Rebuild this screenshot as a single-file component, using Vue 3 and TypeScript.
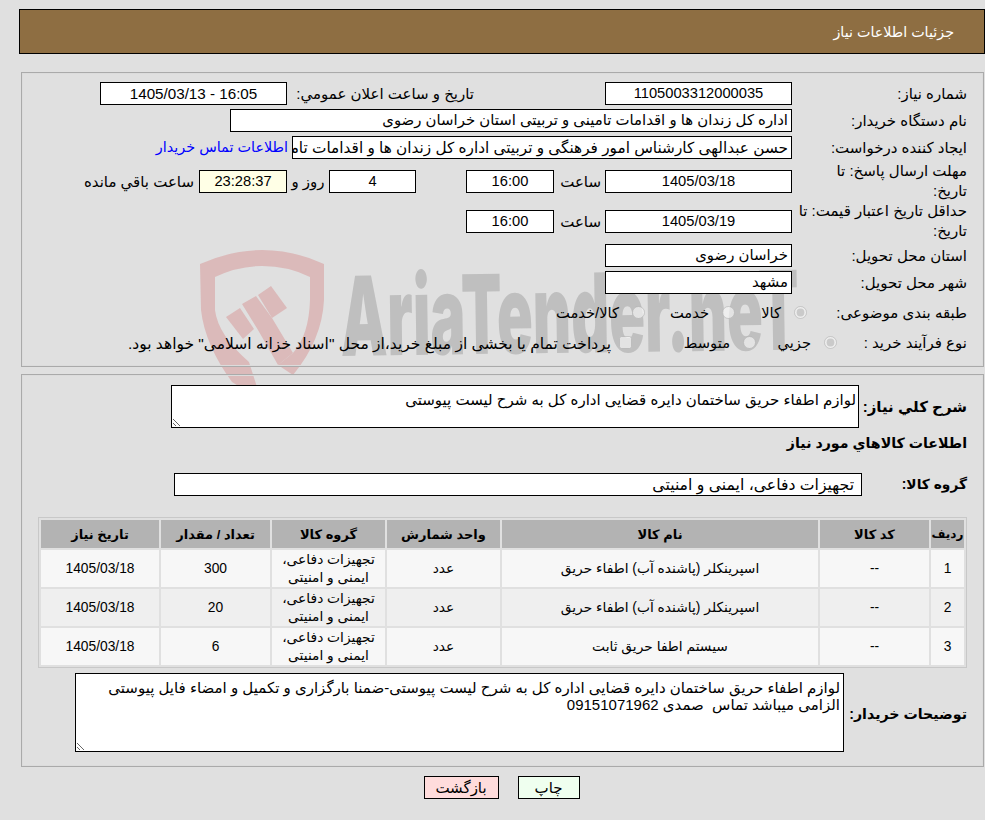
<script setup lang="ts">
interface Item { id: string; code: string; name: string; unit: string; group: string; qty: string; date: string }
const group = 'تجهیزات دفاعی، ایمنی و امنیتی'
const items: Item[] = [
  { id: '1', code: '--', name: 'اسپرینکلر (پاشنده آب) اطفاء حریق', unit: 'عدد', group, qty: '300', date: '1405/03/18' },
  { id: '2', code: '--', name: 'اسپرینکلر (پاشنده آب) اطفاء حریق', unit: 'عدد', group, qty: '20', date: '1405/03/18' },
  { id: '3', code: '--', name: 'سیستم اطفا حریق ثابت', unit: 'عدد', group, qty: '6', date: '1405/03/18' },
]
const summary = 'لوازم اطفاء حریق ساختمان دایره قضایی اداره کل به شرح لیست پیوستی'
const notes = 'لوازم اطفاء حریق ساختمان دایره قضایی اداره کل به شرح لیست پیوستی-ضمنا بارگزاری و تکمیل و امضاء فایل پیوستی الزامی میباشد تماس  صمدی 09151071962'
</script>

<template>
  <div class="page" dir="rtl">
    <svg class="mark" width="985" height="420" viewBox="0 0 985 420" aria-hidden="true">
      <g fill="#dbbaba">
        <path d="M200 64Q232 50 262 50Q294 50 324 64L324 100Q322 140 293 175L278 165L293 153Q309 135 310 100L310 77Q288 66 262 66Q238 66 215 77L215 110Q218 135 249 162L257 187L240 187L232 182Q205 145 201 110Z" />
        <path d="M226 117L240 108L254 129L243 139Z" />
        <path d="M242 104L256 96L272 118L293 153L278 165L258 130Z" />
        <path d="M258 95L271 86L287 108L272 118Z" />
      </g>
      <text class="mark-text" transform="translate(341 156) rotate(-0.8) scale(0.536 1)">AriaTender.neT</text>
    </svg>

    <header class="title">جزئیات اطلاعات نیاز</header>

    <section class="panel first">
      <div class="row r27">
        <label class="lab">شماره نیاز:</label>
        <output class="box w187 center num">1105003312000035</output>
        <span class="publish">تاریخ و ساعت اعلان عمومي:</span>
        <output class="box w187 center stamp">16:05 - 1405/03/13</output>
      </div>
      <div class="row r27">
        <label class="lab">نام دستگاه خریدار:</label>
        <output class="box w562">اداره کل زندان ها و اقدامات تامینی و تربیتی استان خراسان رضوی</output>
      </div>
      <div class="row r27">
        <label class="lab">ایجاد کننده درخواست:</label>
        <output class="box w500 clip">حسن عبدالهی کارشناس امور فرهنگی و تربیتی اداره کل زندان ها و اقدامات تامینی</output>
        <a class="contact" href="#">اطلاعات تماس خریدار</a>
      </div>
      <div class="row r39">
        <label class="lab">مهلت ارسال پاسخ: تا<br />تاریخ:</label>
        <output class="box w187 center num">1405/03/18</output>
        <span class="hour">ساعت</span>
        <output class="box w88 center num">16:00</output>
        <output class="box w87 center days num">4</output>
        <span class="day-text">روز و</span>
        <output class="box w88 center clock num">23:28:37</output>
        <span class="rest">ساعت باقي مانده</span>
      </div>
      <div class="row r39">
        <label class="lab">حداقل تاریخ اعتبار قیمت: تا<br />تاریخ:</label>
        <output class="box w187 center num">1405/03/19</output>
        <span class="hour">ساعت</span>
        <output class="box w88 center num">16:00</output>
      </div>
      <div class="row r27 top1">
        <label class="lab">استان محل تحویل:</label>
        <output class="box w187">خراسان رضوی</output>
      </div>
      <div class="row r27">
        <label class="lab">شهر محل تحویل:</label>
        <output class="box w187">مشهد</output>
      </div>
      <div class="row r30 top2">
        <label class="lab kind-lab">طبقه بندی موضوعی:</label>
        <input class="opt" type="radio" name="kind" checked disabled />
        <span class="opt-t t-kala">کالا</span>
        <input class="opt" type="radio" name="kind" disabled />
        <span class="opt-t t-khedmat">خدمت</span>
        <input class="opt" type="radio" name="kind" disabled />
        <span class="opt-t">کالا/خدمت</span>
      </div>
      <div class="row r30">
        <label class="lab type-lab">نوع فرآیند خرید :</label>
        <input class="opt" type="radio" name="proc" checked disabled />
        <span class="opt-t t-jozi">جزيي</span>
        <input class="opt" type="radio" name="proc" disabled />
        <span class="opt-t t-mot">متوسط</span>
        <input class="opt check" type="checkbox" disabled />
        <span class="opt-t long">پرداخت تمام یا بخشی از مبلغ خرید،از محل "اسناد خزانه اسلامی" خواهد بود.</span>
      </div>
    </section>

    <section class="panel second">
      <div class="row sum-row">
        <label class="lab-b sum-lab">شرح کلي نیاز:</label>
        <textarea class="area sum" readonly :value="summary"></textarea>
      </div>
      <h2 class="subhead">اطلاعات کالاهاي مورد نیاز</h2>
      <div class="row grp-row">
        <label class="lab-b grp-lab">گروه کالا:</label>
        <output class="box grp">{{ group }}</output>
      </div>
      <table class="items">
        <thead>
          <tr>
            <th class="c1">ردیف</th><th class="c2">کد کالا</th><th class="c3">نام کالا</th>
            <th class="c4">واحد شمارش</th><th class="c5">گروه کالا</th><th class="c6">تعداد / مقدار</th><th class="c7">تاریخ نیاز</th>
          </tr>
        </thead>
        <tbody>
          <tr v-for="it in items" :key="it.id">
            <td>{{ it.id }}</td><td>{{ it.code }}</td><td>{{ it.name }}</td><td>{{ it.unit }}</td>
            <td class="wrap">{{ it.group }}</td><td>{{ it.qty }}</td><td>{{ it.date }}</td>
          </tr>
        </tbody>
      </table>
      <div class="row note-row">
        <label class="lab-b note-lab">توضیحات خریدار:</label>
        <textarea class="area note" readonly :value="notes"></textarea>
      </div>
    </section>

    <div class="actions">
      <button class="btn print" type="button">چاپ</button>
      <button class="btn back" type="button">بازگشت</button>
    </div>
  </div>
</template>

<style>
html, body { margin: 0; background: #e0e0e0; }
</style>

<style scoped>
.page {
  position: relative;
  width: 985px;
  height: 820px;
  overflow: hidden;
  box-sizing: border-box;
  padding-top: 9px;
  background: #e0e0e0;
  color: #000;
  font: 15px/17px "Liberation Sans", "DejaVu Sans", sans-serif;
}
.mark { position: absolute; left: 0; top: 200px; direction: ltr; }
.mark-text { font: 900 110px Inter, sans-serif; fill: #bfbfbf; direction: ltr; }
.title {
  position: relative;
  box-sizing: border-box;
  height: 45px;
  margin-left: 19px;
  padding: 14px 30px 0 0;
  border: 1px solid #000;
  background: #8e6e42;
  color: #fff;
  font-size: 14.3px;
}
.panel {
  position: relative;
  box-sizing: border-box;
  margin-right: 1px;
  margin-left: 21px;
  padding-right: 15px;
  border: 1px solid #aaa;
  box-shadow: inset 0 0 0 1px #dcdcdc;
}
.first { height: 295px; margin-top: 18px; padding-top: 7px; }
.second { height: 393px; margin-top: 7px; padding-top: 10px; }
.row { display: flex; align-items: center; }
.r27 { height: 27px; }
.r39 { height: 40px; }
.r30 { height: 30px; }
.top1 { margin-top: 1px; }
.top2 { margin-top: 2px; }
.lab { box-sizing: border-box; flex: none; width: 176px; padding-right: 1px; line-height: 20px; white-space: nowrap; }
.box {
  display: block;
  flex: none;
  box-sizing: border-box;
  height: 23px;
  padding: 2px 3px;
  border: 1px solid #000;
  background: #fff;
  font-size: 14.9px;
  white-space: nowrap;
}
.center { text-align: center; }
.num { font-size: 14.7px; }
.stamp { font-size: 15.2px; }
.clip { overflow: hidden; font-size: 15.3px; }
.w187 { width: 187px; }
.w562 { width: 562px; }
.w500 { width: 500px; }
.w88 { width: 88px; }
.w87 { width: 87px; }
.publish { box-sizing: border-box; flex: none; width: 313px; margin-left: 5px; padding-right: 131px; white-space: nowrap; }
.contact { margin-right: 4px; color: #00f; font-size: 14.4px; text-decoration: none; white-space: nowrap; }
.hour { flex: none; width: 41px; margin-right: 4px; margin-left: 6px; }
.days { margin-right: 50px; }
.day-text { flex: none; width: 42px; text-align: center; white-space: nowrap; }
.rest { margin-right: 5px; white-space: nowrap; }
.clock { background: #ffffe6; }
.opt { flex: none; width: 13px; height: 13px; margin: 0 0 2px 13px; }
.opt-t { flex: none; font-size: 14.7px; white-space: nowrap; }
.kind-lab { width: 161px; }
.type-lab { width: 131px; }
.t-kala { width: 46px; }
.t-khedmat { width: 64px; }
.t-jozi { width: 55px; }
.t-mot { width: 98px; }
.check { margin-left: 8px; }
.long { font-size: 15.5px; }
.lab-b { flex: none; box-sizing: border-box; padding-right: 1px; font-weight: 700; white-space: nowrap; }
.sum-row { align-items: flex-start; height: 43px; }
.sum-lab { width: 109px; padding-top: 13px; font-size: 15px; }
.area {
  display: block;
  flex: none;
  box-sizing: border-box;
  margin: 0;
  padding: 5px 2px 2px;
  border: 1px solid #000;
  border-radius: 0;
  background: #fff;
  color: #000;
  font: inherit;
  font-size: 15px;
  direction: rtl;
  outline: none;
}
.sum { width: 688px; height: 43px; }
.subhead { height: 22px; margin: 4px 1px 0 0; font-size: 14.2px; font-weight: 700; line-height: 22px; }
.grp-row { height: 23px; margin-top: 19px; }
.grp-lab { width: 106px; font-size: 13.8px; }
.grp { width: 688px; padding-right: 7px; font-size: 15.7px; }
.items {
  box-sizing: border-box;
  width: 929px;
  height: 149px;
  margin: 21px 1px 0 0;
  border: 1px solid #c8c8c8;
  border-spacing: 2px;
  table-layout: fixed;
  font-size: 13.8px;
  text-align: center;
}
.items th { height: 28px; padding: 0; background: #b3b3b3; font-size: 13px; font-weight: 700; }
.items td { height: 37px; padding: 0 2px; }
.items tbody tr:nth-child(odd) td { background: #f7f7f7; }
.items tbody tr:nth-child(even) td { background: #efefef; }
.items th.c1 { width: 33px; font-size: 12px; }
.c2 { width: 109px; }
.c3 { width: 316px; }
.c4 { width: 113px; }
.c5 { width: 113px; }
.c6 { width: 109px; }
.c7 { width: 118px; }
.wrap { line-height: 18px; }
.note-row { height: 79px; margin-top: 5px; }
.note-lab { width: 124px; padding-top: 3px; font-size: 14.2px; }
.note { width: 769px; height: 79px; padding-right: 3px; }
.actions { position: relative; display: flex; justify-content: center; gap: 19px; margin-top: 9px; padding-left: 18px; }
.btn {
  box-sizing: border-box;
  height: 23px;
  padding: 0;
  border: 1px solid #000;
  border-radius: 0;
  color: #000;
  font: inherit;
}
.print { width: 62px; background: #efffef; }
.back { width: 75px; background: #ffdcdc; }
</style>
